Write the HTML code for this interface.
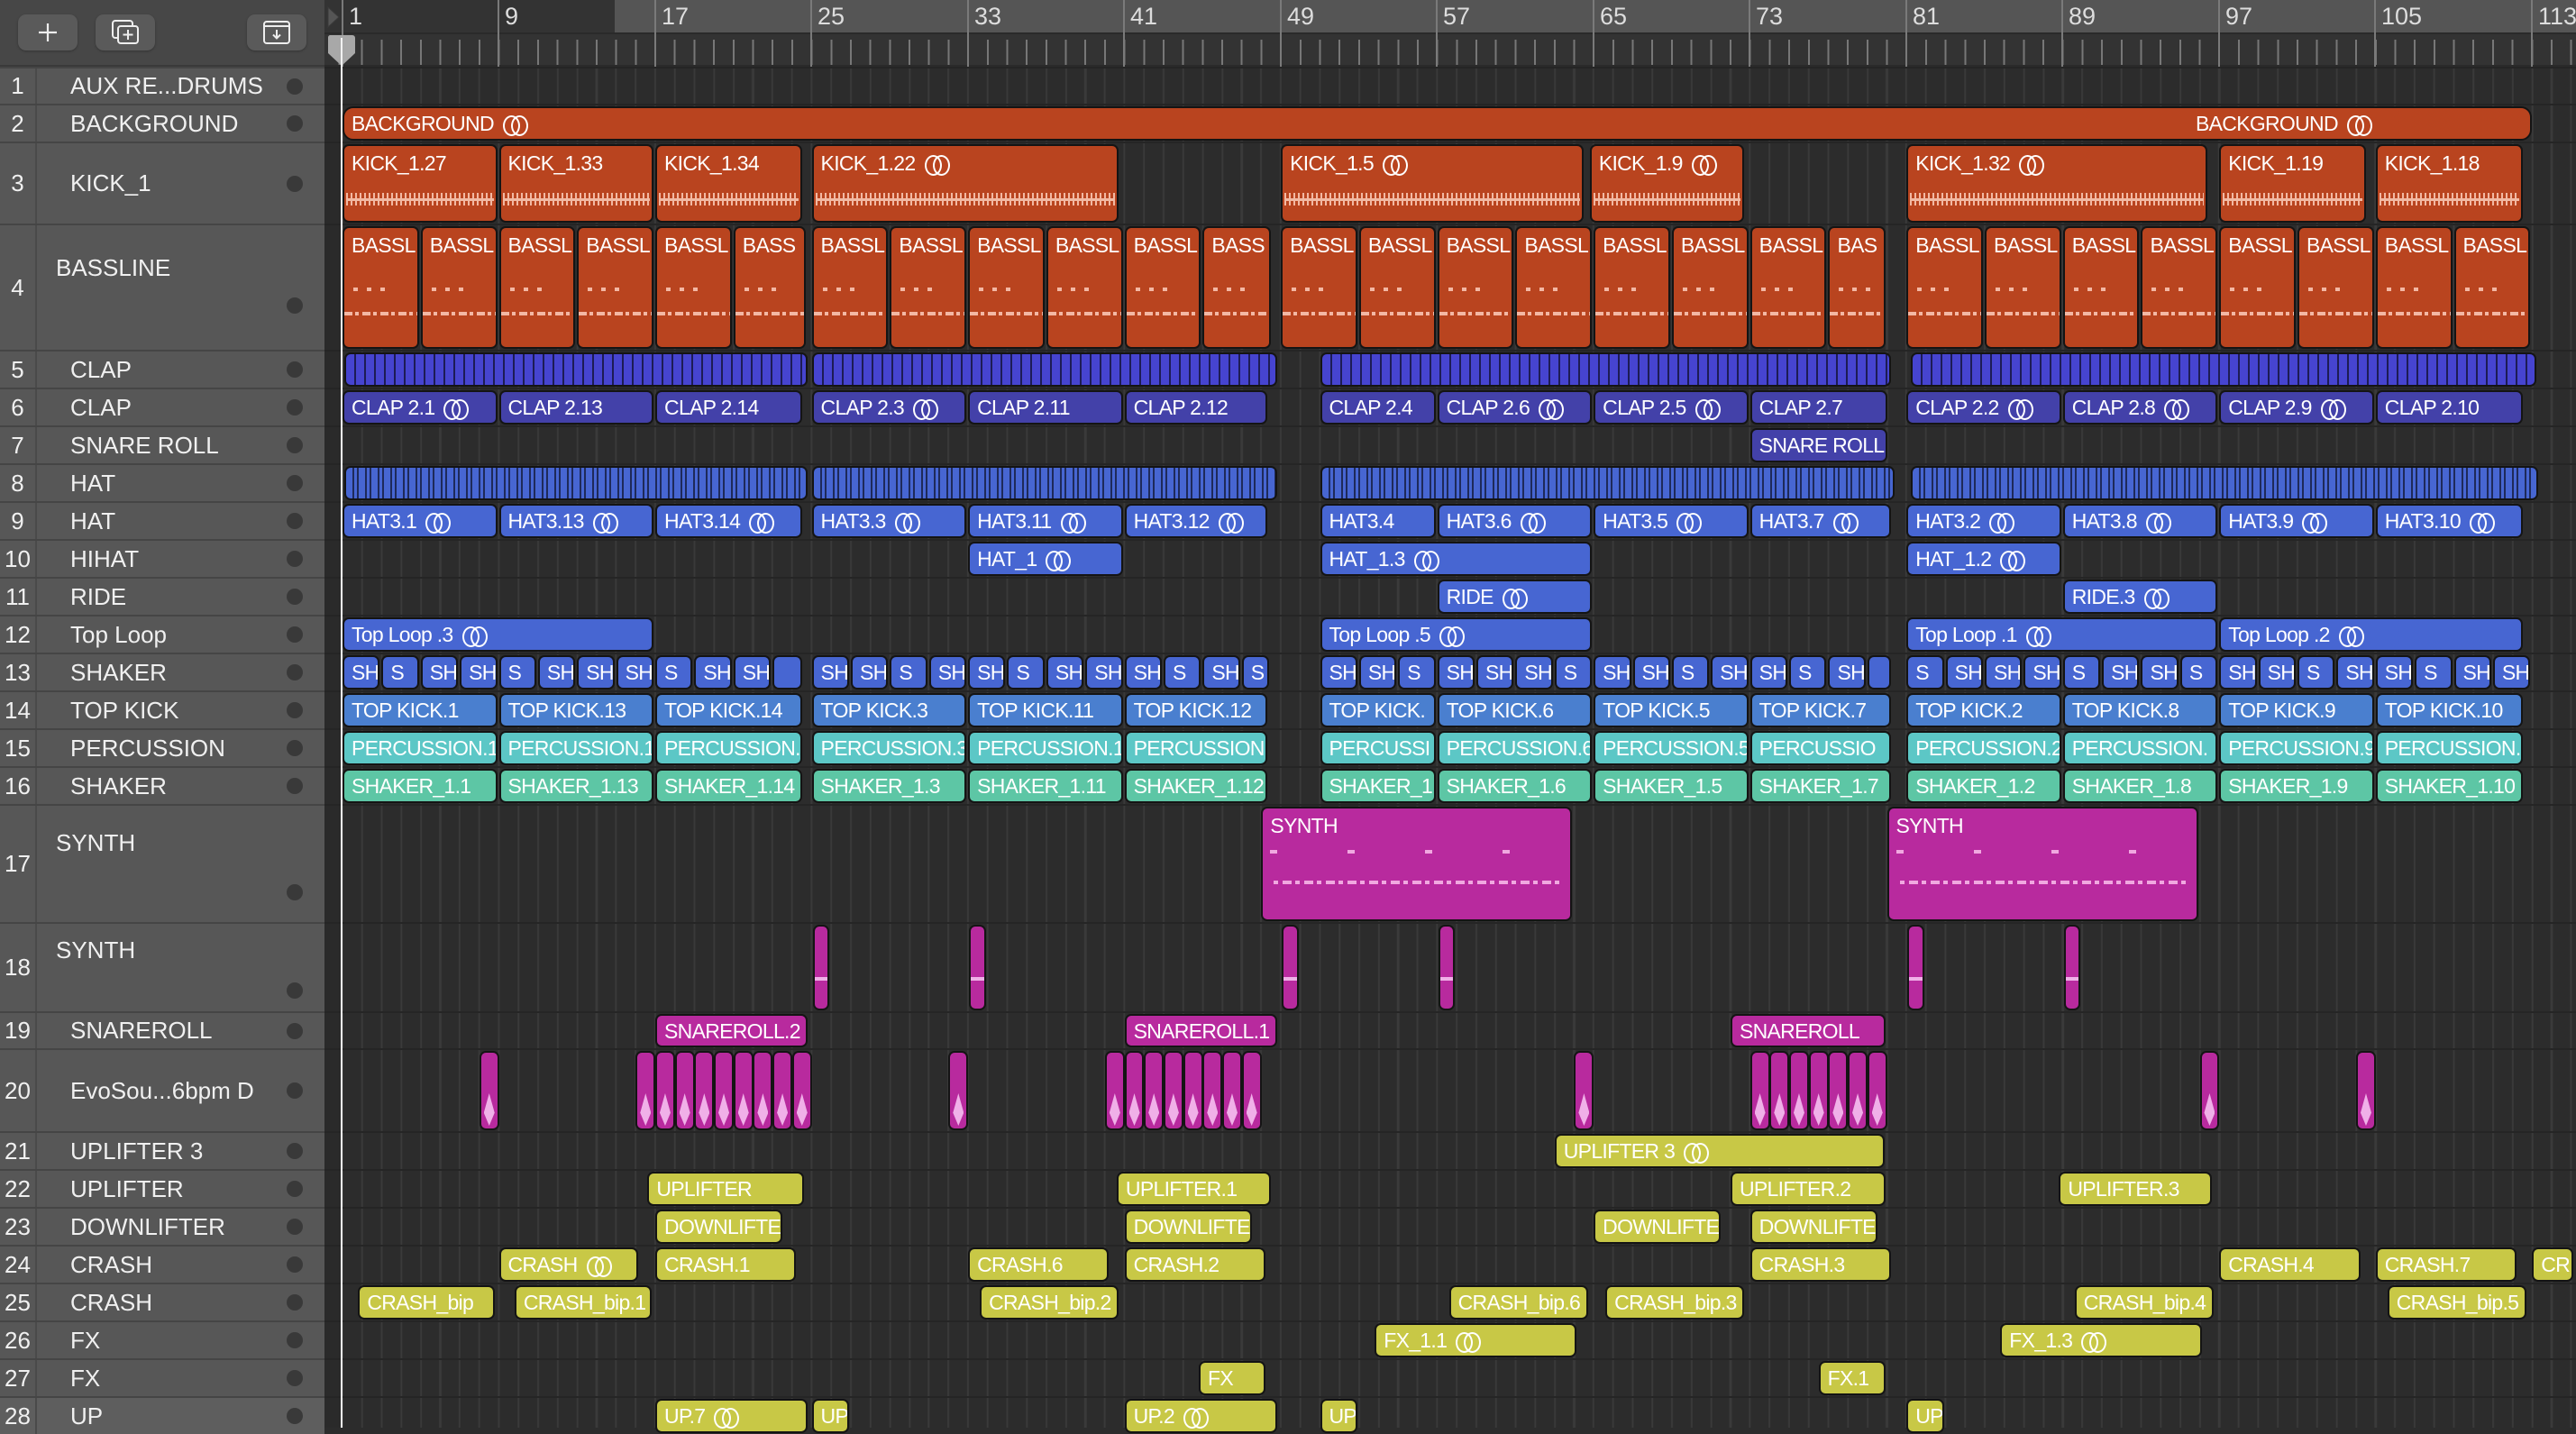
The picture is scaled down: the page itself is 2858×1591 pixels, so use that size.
<!DOCTYPE html>
<html><head><meta charset="utf-8"><style>
*{margin:0;padding:0;box-sizing:border-box}
body{width:2858px;height:1584px;overflow:hidden;background:#2c2c2c;font-family:"Liberation Sans",sans-serif;position:relative}
.tb{position:absolute;left:0;top:0;width:360px;height:74px;background:#474747;border-bottom:2px solid #3a3a3a}
.btn{position:absolute;top:16px;width:66px;height:40px;background:#5a5a5a;border-radius:9px;box-shadow:0 1px 2px #333}
.btn svg{position:absolute;left:0;top:0}
.rt{position:absolute;left:360px;top:0;width:2498px;height:36px;background:#555}
.rtd{position:absolute;left:360px;top:0;width:322px;height:36px;background:#333}
.rb{position:absolute;left:360px;top:36px;width:2498px;height:38px;background:#333;border-top:2px solid #2a2a2a;border-bottom:2px solid #2a2a2a;
background-image:repeating-linear-gradient(90deg,#777 0 2px,transparent 2px 21.69px);background-position:19px 6px;background-size:100% 30px;background-repeat:repeat-x}
.bn{position:absolute;top:0;height:74px;border-left:2px solid #7a7a7a;color:#ddd;font-size:27px;padding-left:6px;line-height:36px}
.grid{position:absolute;left:360px;top:74px;width:2498px;height:1510px;background-image:repeating-linear-gradient(90deg,#3a3a3a 0 2px,transparent 2px 21.69px);background-position:19px 0}
.w{position:absolute;left:0;width:2858px;border-top:2px solid #252525}
.hd{position:absolute;left:0;top:-2px;bottom:0;width:360px;background:#575757;border-top:2px solid #454545;color:#f0f0f0;font-size:26px}
.hd .n{position:absolute;left:0;top:0;bottom:0;width:41px;border-right:2px solid #4a4a4a;text-align:center;display:flex;align-items:center;justify-content:center}
.hd .nm{position:absolute;left:78px;top:0;bottom:0;display:flex;align-items:center;white-space:nowrap}
.hd .nm.tp{left:62px;align-items:flex-start}
.hd .d{position:absolute;left:318px;top:50%;margin-top:-9px;width:18px;height:18px;border-radius:50%;background:#393939}
.strip{position:absolute;left:360px;top:74px;width:19px;height:1510px;background:#2a2a2a}
.g{position:absolute;top:1px;bottom:1px;left:calc(380px + (var(--s) - 1) * 21.69px);width:calc((var(--e) - var(--s)) * 21.69px - 2px);border:2px solid #141414;border-radius:7px;color:#fff;font-size:23px;letter-spacing:-0.7px;padding-left:8px;line-height:34px;white-space:nowrap;overflow:hidden}
.o{background:#b9441f}
.c{background:#4341a9}
.cs{background:repeating-linear-gradient(90deg,#4644d0 0 9px,#1d1c55 9px 11px)}
.h{background:#4766d2}
.hs{background:repeating-linear-gradient(90deg,#4766d2 0 7px,#1e2a5a 7px 9px,#4766d2 9px 12px,#1e2a5a 12px 14px)}
.k2{background:#4a7fcf}
.p{background:#5cc7c6}
.s{background:#5dc6a5}
.m{background:#b82a9e}
.y{background:#c8c846}
.l{display:inline-block;position:relative;width:30px;height:20px;vertical-align:-3px;margin-left:10px}
.l::before,.l::after{content:"";position:absolute;top:0;width:15px;height:19px;border:2.5px solid #fff;border-radius:50%}
.l::before{left:0}.l::after{left:9px}
.wk::after{content:"";position:absolute;left:2px;right:2px;top:52px;height:14px;background:repeating-linear-gradient(90deg,#f2b9a3 0 2px,transparent 2px 5px)}
.wk::before{content:"";position:absolute;left:2px;right:2px;top:58px;height:3px;background:#f2b9a3}
.bs::before{content:"";position:absolute;left:10px;width:40px;top:66px;height:4px;background:repeating-linear-gradient(90deg,#f3b8a4 0 5px,transparent 5px 15px)}
.bs::after{content:"";position:absolute;left:0;right:0;top:93px;height:4px;background:repeating-linear-gradient(90deg,#f3b8a4 0 9px,transparent 9px 12px,#f3b8a4 12px 16px,transparent 16px 20px)}
.sy::before{content:"";position:absolute;left:8px;right:8px;top:46px;height:4px;background:repeating-linear-gradient(90deg,#f0a8e0 0 8px,transparent 8px 86px)}
.sy::after{content:"";position:absolute;left:12px;right:8px;top:80px;height:4px;background:repeating-linear-gradient(90deg,#f0a8e0 0 5px,transparent 5px 10px,#f0a8e0 10px 20px,transparent 20px 24px)}
.ev::after{content:"";position:absolute;left:50%;margin-left:-6px;top:45px;width:12px;height:36px;background:#f0b0e8;clip-path:polygon(50% 0,100% 60%,50% 100%,0 60%)}
.sy2{padding:0}
.sy2::after{content:"";position:absolute;left:0;right:0;top:56px;height:4px;background:#f0b0e8}
.tall{line-height:30px;padding-top:4px}
</style></head><body>

<div class="tb">
 <div class="btn" style="left:20px"><svg width="66" height="40"><path d="M33 10V30M23 20H43" stroke="#eee" stroke-width="2.2"/></svg></div>
 <div class="btn" style="left:106px"><svg width="66" height="40"><rect x="19" y="7" width="22" height="19" rx="3" fill="none" stroke="#eee" stroke-width="2"/><rect x="25" y="13" width="22" height="19" rx="3" fill="#5a5a5a" stroke="#eee" stroke-width="2"/><path d="M36 17V28M30.5 22.5H41.5" stroke="#eee" stroke-width="2"/></svg></div>
 <div class="btn" style="left:274px"><svg width="66" height="40"><rect x="19" y="8" width="28" height="24" rx="3" fill="none" stroke="#eee" stroke-width="2"/><path d="M19 13H47M33 17V26M29 22.5L33 26.5L37 22.5" stroke="#eee" stroke-width="2" fill="none"/></svg></div>
</div>

<div class="rt"></div><div class="rtd"></div>
<div class="rb"></div>
<svg style="position:absolute;left:362px;top:6px" width="16" height="26"><path d="M2 2L14 13L2 24Z" fill="#555" stroke="#3a3a3a"/></svg>
<div class="bn" style="left:379px">1</div>
<div class="bn" style="left:552px">9</div>
<div class="bn" style="left:726px">17</div>
<div class="bn" style="left:899px">25</div>
<div class="bn" style="left:1073px">33</div>
<div class="bn" style="left:1246px">41</div>
<div class="bn" style="left:1420px">49</div>
<div class="bn" style="left:1593px">57</div>
<div class="bn" style="left:1767px">65</div>
<div class="bn" style="left:1940px">73</div>
<div class="bn" style="left:2114px">81</div>
<div class="bn" style="left:2287px">89</div>
<div class="bn" style="left:2461px">97</div>
<div class="bn" style="left:2634px">105</div>
<div class="bn" style="left:2808px">113</div>

<div class="grid"></div>
<div class="strip"></div>

<div class="w" style="top:74px;height:41px"><div class="hd"><span class="n">1</span><span class="nm">AUX RE...DRUMS</span><span class="d"></span></div></div>

<div class="w" style="top:115px;height:42px"><div class="hd"><span class="n">2</span><span class="nm">BACKGROUND</span><span class="d"></span></div>
<div class="g o" style="--s:1;--e:113.1;border-radius:12px">BACKGROUND<span class="l"></span><span style="position:absolute;left:2054px">BACKGROUND<span class="l"></span></span></div>
</div>

<div class="w" style="top:157px;height:91px"><div class="hd"><span class="n">3</span><span class="nm">KICK_1</span><span class="d"></span></div>
<div class="g o wk tall" style="--s:1;--e:9">KICK_1.27</div>
<div class="g o wk tall" style="--s:9;--e:17">KICK_1.33</div>
<div class="g o wk tall" style="--s:17;--e:24.6">KICK_1.34</div>
<div class="g o wk tall" style="--s:25;--e:40.8">KICK_1.22<span class="l"></span></div>
<div class="g o wk tall" style="--s:49;--e:64.6">KICK_1.5<span class="l"></span></div>
<div class="g o wk tall" style="--s:64.8;--e:72.8">KICK_1.9<span class="l"></span></div>
<div class="g o wk tall" style="--s:81;--e:96.5">KICK_1.32<span class="l"></span></div>
<div class="g o wk tall" style="--s:97;--e:104.6">KICK_1.19</div>
<div class="g o wk tall" style="--s:105;--e:112.6">KICK_1.18</div>
</div>

<div class="w" style="top:248px;height:140px"><div class="hd"><span class="n">4</span><span class="nm tp" style="top:32px">BASSLINE</span><span class="d" style="top:auto;bottom:40px"></span></div>
<div class="g o bs tall" style="--s:1;--e:5">BASSL</div><div class="g o bs tall" style="--s:5;--e:9">BASSL</div><div class="g o bs tall" style="--s:9;--e:13">BASSL</div><div class="g o bs tall" style="--s:13;--e:17">BASSL</div><div class="g o bs tall" style="--s:17;--e:21">BASSL</div><div class="g o bs tall" style="--s:21;--e:24.8">BASS</div>
<div class="g o bs tall" style="--s:25;--e:29">BASSL</div><div class="g o bs tall" style="--s:29;--e:33">BASSL</div><div class="g o bs tall" style="--s:33;--e:37">BASSL</div><div class="g o bs tall" style="--s:37;--e:41">BASSL</div><div class="g o bs tall" style="--s:41;--e:45">BASSL</div><div class="g o bs tall" style="--s:45;--e:48.6">BASS</div>
<div class="g o bs tall" style="--s:49;--e:53">BASSL</div><div class="g o bs tall" style="--s:53;--e:57">BASSL</div><div class="g o bs tall" style="--s:57;--e:61">BASSL</div><div class="g o bs tall" style="--s:61;--e:65">BASSL</div><div class="g o bs tall" style="--s:65;--e:69">BASSL</div><div class="g o bs tall" style="--s:69;--e:73">BASSL</div><div class="g o bs tall" style="--s:73;--e:77">BASSL</div><div class="g o bs tall" style="--s:77;--e:80">BAS</div>
<div class="g o bs tall" style="--s:81;--e:85">BASSL</div><div class="g o bs tall" style="--s:85;--e:89">BASSL</div><div class="g o bs tall" style="--s:89;--e:93">BASSL</div><div class="g o bs tall" style="--s:93;--e:97">BASSL</div><div class="g o bs tall" style="--s:97;--e:101">BASSL</div><div class="g o bs tall" style="--s:101;--e:105">BASSL</div><div class="g o bs tall" style="--s:105;--e:109">BASSL</div><div class="g o bs tall" style="--s:109;--e:113">BASSL</div>
</div>

<div class="w" style="top:388px;height:42px"><div class="hd"><span class="n">5</span><span class="nm">CLAP</span><span class="d"></span></div>
<div class="g cs" style="--s:1.1;--e:24.9"></div><div class="g cs" style="--s:25;--e:48.9"></div><div class="g cs" style="--s:51;--e:80.3"></div><div class="g cs" style="--s:81.2;--e:113.3"></div>
</div>

<div class="w" style="top:430px;height:42px"><div class="hd"><span class="n">6</span><span class="nm">CLAP</span><span class="d"></span></div>
<div class="g c" style="--s:1;--e:9">CLAP 2.1<span class="l"></span></div><div class="g c" style="--s:9;--e:17">CLAP 2.13</div><div class="g c" style="--s:17;--e:24.6">CLAP 2.14</div><div class="g c" style="--s:25;--e:33">CLAP 2.3<span class="l"></span></div><div class="g c" style="--s:33;--e:41">CLAP 2.11</div><div class="g c" style="--s:41;--e:48.4">CLAP 2.12</div>
<div class="g c" style="--s:51;--e:57">CLAP 2.4</div><div class="g c" style="--s:57;--e:65">CLAP 2.6<span class="l"></span></div><div class="g c" style="--s:65;--e:73">CLAP 2.5<span class="l"></span></div><div class="g c" style="--s:73;--e:80.1">CLAP 2.7</div>
<div class="g c" style="--s:81;--e:89">CLAP 2.2<span class="l"></span></div><div class="g c" style="--s:89;--e:97">CLAP 2.8<span class="l"></span></div><div class="g c" style="--s:97;--e:105">CLAP 2.9<span class="l"></span></div><div class="g c" style="--s:105;--e:112.6">CLAP 2.10</div>
</div>

<div class="w" style="top:472px;height:42px"><div class="hd"><span class="n">7</span><span class="nm">SNARE ROLL</span><span class="d"></span></div>
<div class="g c" style="--s:73;--e:80.1">SNARE ROLL</div>
</div>

<div class="w" style="top:514px;height:42px"><div class="hd"><span class="n">8</span><span class="nm">HAT</span><span class="d"></span></div>
<div class="g hs" style="--s:1.1;--e:24.9"></div><div class="g hs" style="--s:25;--e:48.9"></div><div class="g hs" style="--s:51;--e:80.5"></div><div class="g hs" style="--s:81.2;--e:113.4"></div>
</div>

<div class="w" style="top:556px;height:42px"><div class="hd"><span class="n">9</span><span class="nm">HAT</span><span class="d"></span></div>
<div class="g h" style="--s:1;--e:9">HAT3.1<span class="l"></span></div><div class="g h" style="--s:9;--e:17">HAT3.13<span class="l"></span></div><div class="g h" style="--s:17;--e:24.6">HAT3.14<span class="l"></span></div><div class="g h" style="--s:25;--e:33">HAT3.3<span class="l"></span></div><div class="g h" style="--s:33;--e:41">HAT3.11<span class="l"></span></div><div class="g h" style="--s:41;--e:48.4">HAT3.12<span class="l"></span></div>
<div class="g h" style="--s:51;--e:57">HAT3.4</div><div class="g h" style="--s:57;--e:65">HAT3.6<span class="l"></span></div><div class="g h" style="--s:65;--e:73">HAT3.5<span class="l"></span></div><div class="g h" style="--s:73;--e:80.3">HAT3.7<span class="l"></span></div>
<div class="g h" style="--s:81;--e:89">HAT3.2<span class="l"></span></div><div class="g h" style="--s:89;--e:97">HAT3.8<span class="l"></span></div><div class="g h" style="--s:97;--e:105">HAT3.9<span class="l"></span></div><div class="g h" style="--s:105;--e:112.6">HAT3.10<span class="l"></span></div>
</div>

<div class="w" style="top:598px;height:42px"><div class="hd"><span class="n">10</span><span class="nm">HIHAT</span><span class="d"></span></div>
<div class="g h" style="--s:33;--e:41">HAT_1<span class="l"></span></div><div class="g h" style="--s:51;--e:65">HAT_1.3<span class="l"></span></div><div class="g h" style="--s:81;--e:89">HAT_1.2<span class="l"></span></div>
</div>

<div class="w" style="top:640px;height:42px"><div class="hd"><span class="n">11</span><span class="nm">RIDE</span><span class="d"></span></div>
<div class="g h" style="--s:57;--e:65">RIDE<span class="l"></span></div><div class="g h" style="--s:89;--e:97">RIDE.3<span class="l"></span></div>
</div>

<div class="w" style="top:682px;height:42px"><div class="hd"><span class="n">12</span><span class="nm">Top Loop</span><span class="d"></span></div>
<div class="g h" style="--s:1;--e:17">Top Loop .3<span class="l"></span></div><div class="g h" style="--s:51;--e:65">Top Loop .5<span class="l"></span></div><div class="g h" style="--s:81;--e:97">Top Loop .1<span class="l"></span></div><div class="g h" style="--s:97;--e:112.6">Top Loop .2<span class="l"></span></div>
</div>

<div class="w" style="top:724px;height:42px"><div class="hd"><span class="n">13</span><span class="nm">SHAKER</span><span class="d"></span></div>
<div class="g h" style="--s:1;--e:3">SH</div><div class="g h" style="--s:3;--e:5">S</div><div class="g h" style="--s:5;--e:7">SH</div><div class="g h" style="--s:7;--e:9">SH</div><div class="g h" style="--s:9;--e:11">S</div><div class="g h" style="--s:11;--e:13">SH</div><div class="g h" style="--s:13;--e:15">SH</div><div class="g h" style="--s:15;--e:17">SH</div><div class="g h" style="--s:17;--e:19">S</div><div class="g h" style="--s:19;--e:21">SH</div><div class="g h" style="--s:21;--e:23">SH</div><div class="g h" style="--s:23;--e:24.6"></div>
<div class="g h" style="--s:25;--e:27">SH</div><div class="g h" style="--s:27;--e:29">SH</div><div class="g h" style="--s:29;--e:31">S</div><div class="g h" style="--s:31;--e:33">SH</div><div class="g h" style="--s:33;--e:35">SH</div><div class="g h" style="--s:35;--e:37">S</div><div class="g h" style="--s:37;--e:39">SH</div><div class="g h" style="--s:39;--e:41">SH</div><div class="g h" style="--s:41;--e:43">SH</div><div class="g h" style="--s:43;--e:45">S</div><div class="g h" style="--s:45;--e:47">SH</div><div class="g h" style="--s:47;--e:48.5">S</div>
<div class="g h" style="--s:51;--e:53">SH</div><div class="g h" style="--s:53;--e:55">SH</div><div class="g h" style="--s:55;--e:57">S</div><div class="g h" style="--s:57;--e:59">SH</div><div class="g h" style="--s:59;--e:61">SH</div><div class="g h" style="--s:61;--e:63">SH</div><div class="g h" style="--s:63;--e:65">S</div><div class="g h" style="--s:65;--e:67">SH</div><div class="g h" style="--s:67;--e:69">SH</div><div class="g h" style="--s:69;--e:71">S</div><div class="g h" style="--s:71;--e:73">SH</div><div class="g h" style="--s:73;--e:75">SH</div><div class="g h" style="--s:75;--e:77">S</div><div class="g h" style="--s:77;--e:79">SH</div><div class="g h" style="--s:79;--e:80.3"></div>
<div class="g h" style="--s:81;--e:83">S</div><div class="g h" style="--s:83;--e:85">SH</div><div class="g h" style="--s:85;--e:87">SH</div><div class="g h" style="--s:87;--e:89">SH</div><div class="g h" style="--s:89;--e:91">S</div><div class="g h" style="--s:91;--e:93">SH</div><div class="g h" style="--s:93;--e:95">SH</div><div class="g h" style="--s:95;--e:97">S</div><div class="g h" style="--s:97;--e:99">SH</div><div class="g h" style="--s:99;--e:101">SH</div><div class="g h" style="--s:101;--e:103">S</div><div class="g h" style="--s:103;--e:105">SH</div><div class="g h" style="--s:105;--e:107">SH</div><div class="g h" style="--s:107;--e:109">S</div><div class="g h" style="--s:109;--e:111">SH</div><div class="g h" style="--s:111;--e:113">SH</div>
</div>

<div class="w" style="top:766px;height:42px"><div class="hd"><span class="n">14</span><span class="nm">TOP KICK</span><span class="d"></span></div>
<div class="g k2" style="--s:1;--e:9">TOP KICK.1</div><div class="g k2" style="--s:9;--e:17">TOP KICK.13</div><div class="g k2" style="--s:17;--e:24.6">TOP KICK.14</div><div class="g k2" style="--s:25;--e:33">TOP KICK.3</div><div class="g k2" style="--s:33;--e:41">TOP KICK.11</div><div class="g k2" style="--s:41;--e:48.4">TOP KICK.12</div>
<div class="g k2" style="--s:51;--e:57">TOP KICK.</div><div class="g k2" style="--s:57;--e:65">TOP KICK.6</div><div class="g k2" style="--s:65;--e:73">TOP KICK.5</div><div class="g k2" style="--s:73;--e:80.3">TOP KICK.7</div>
<div class="g k2" style="--s:81;--e:89">TOP KICK.2</div><div class="g k2" style="--s:89;--e:97">TOP KICK.8</div><div class="g k2" style="--s:97;--e:105">TOP KICK.9</div><div class="g k2" style="--s:105;--e:112.6">TOP KICK.10</div>
</div>

<div class="w" style="top:808px;height:42px"><div class="hd"><span class="n">15</span><span class="nm">PERCUSSION</span><span class="d"></span></div>
<div class="g p" style="--s:1;--e:9">PERCUSSION.1</div><div class="g p" style="--s:9;--e:17">PERCUSSION.1</div><div class="g p" style="--s:17;--e:24.6">PERCUSSION.</div><div class="g p" style="--s:25;--e:33">PERCUSSION.3</div><div class="g p" style="--s:33;--e:41">PERCUSSION.1</div><div class="g p" style="--s:41;--e:48.4">PERCUSSION.</div>
<div class="g p" style="--s:51;--e:57">PERCUSSI</div><div class="g p" style="--s:57;--e:65">PERCUSSION.6</div><div class="g p" style="--s:65;--e:73">PERCUSSION.5</div><div class="g p" style="--s:73;--e:80.3">PERCUSSIO</div>
<div class="g p" style="--s:81;--e:89">PERCUSSION.2</div><div class="g p" style="--s:89;--e:97">PERCUSSION.</div><div class="g p" style="--s:97;--e:105">PERCUSSION.9</div><div class="g p" style="--s:105;--e:112.6">PERCUSSION.1</div>
</div>

<div class="w" style="top:850px;height:42px"><div class="hd"><span class="n">16</span><span class="nm">SHAKER</span><span class="d"></span></div>
<div class="g s" style="--s:1;--e:9">SHAKER_1.1</div><div class="g s" style="--s:9;--e:17">SHAKER_1.13</div><div class="g s" style="--s:17;--e:24.6">SHAKER_1.14</div><div class="g s" style="--s:25;--e:33">SHAKER_1.3</div><div class="g s" style="--s:33;--e:41">SHAKER_1.11</div><div class="g s" style="--s:41;--e:48.4">SHAKER_1.12</div>
<div class="g s" style="--s:51;--e:57">SHAKER_1.</div><div class="g s" style="--s:57;--e:65">SHAKER_1.6</div><div class="g s" style="--s:65;--e:73">SHAKER_1.5</div><div class="g s" style="--s:73;--e:80.3">SHAKER_1.7</div>
<div class="g s" style="--s:81;--e:89">SHAKER_1.2</div><div class="g s" style="--s:89;--e:97">SHAKER_1.8</div><div class="g s" style="--s:97;--e:105">SHAKER_1.9</div><div class="g s" style="--s:105;--e:112.6">SHAKER_1.10</div>
</div>

<div class="w" style="top:892px;height:131px"><div class="hd"><span class="n">17</span><span class="nm tp" style="top:26px">SYNTH</span><span class="d" style="top:87px;margin-top:0"></span></div>
<div class="g m sy tall" style="--s:48;--e:64">SYNTH</div><div class="g m sy tall" style="--s:80;--e:96">SYNTH</div>
</div>

<div class="w" style="top:1023px;height:99px"><div class="hd"><span class="n">18</span><span class="nm tp" style="top:14px">SYNTH</span><span class="d" style="top:65px;margin-top:0"></span></div>
<div class="g m sy2" style="--s:25.05;--e:26"></div><div class="g m sy2" style="--s:33.05;--e:34"></div><div class="g m sy2" style="--s:49.05;--e:50"></div><div class="g m sy2" style="--s:57.05;--e:58"></div><div class="g m sy2" style="--s:81.05;--e:82"></div><div class="g m sy2" style="--s:89.05;--e:90"></div>
</div>

<div class="w" style="top:1122px;height:41px"><div class="hd"><span class="n">19</span><span class="nm">SNAREROLL</span><span class="d"></span></div>
<div class="g m" style="--s:17;--e:24.9">SNAREROLL.2</div><div class="g m" style="--s:41;--e:48.9">SNAREROLL.1</div><div class="g m" style="--s:72;--e:80">SNAREROLL</div>
</div>

<div class="w" style="top:1163px;height:92px"><div class="hd"><span class="n">20</span><span class="nm">EvoSou...6bpm D</span><span class="d"></span></div>
<div class="g m ev" style="--s:8;--e:9.1"></div>
<div class="g m ev" style="--s:16;--e:17.1"></div><div class="g m ev" style="--s:17;--e:18.1"></div><div class="g m ev" style="--s:18;--e:19.1"></div><div class="g m ev" style="--s:19;--e:20.1"></div><div class="g m ev" style="--s:20;--e:21.1"></div><div class="g m ev" style="--s:21;--e:22.1"></div><div class="g m ev" style="--s:22;--e:23.1"></div><div class="g m ev" style="--s:23;--e:24.1"></div><div class="g m ev" style="--s:24;--e:25.1"></div>
<div class="g m ev" style="--s:32;--e:33.1"></div>
<div class="g m ev" style="--s:40;--e:41.1"></div><div class="g m ev" style="--s:41;--e:42.1"></div><div class="g m ev" style="--s:42;--e:43.1"></div><div class="g m ev" style="--s:43;--e:44.1"></div><div class="g m ev" style="--s:44;--e:45.1"></div><div class="g m ev" style="--s:45;--e:46.1"></div><div class="g m ev" style="--s:46;--e:47.1"></div><div class="g m ev" style="--s:47;--e:48.1"></div>
<div class="g m ev" style="--s:64;--e:65.1"></div>
<div class="g m ev" style="--s:73;--e:74.1"></div><div class="g m ev" style="--s:74;--e:75.1"></div><div class="g m ev" style="--s:75;--e:76.1"></div><div class="g m ev" style="--s:76;--e:77.1"></div><div class="g m ev" style="--s:77;--e:78.1"></div><div class="g m ev" style="--s:78;--e:79.1"></div><div class="g m ev" style="--s:79;--e:80.1"></div>
<div class="g m ev" style="--s:96;--e:97.1"></div><div class="g m ev" style="--s:104;--e:105.1"></div>
</div>

<div class="w" style="top:1255px;height:42px"><div class="hd"><span class="n">21</span><span class="nm">UPLIFTER 3</span><span class="d"></span></div>
<div class="g y" style="--s:63;--e:80">UPLIFTER 3<span class="l"></span></div>
</div>

<div class="w" style="top:1297px;height:42px"><div class="hd"><span class="n">22</span><span class="nm">UPLIFTER</span><span class="d"></span></div>
<div class="g y" style="--s:16.6;--e:24.7">UPLIFTER</div><div class="g y" style="--s:40.6;--e:48.6">UPLIFTER.1</div><div class="g y" style="--s:72;--e:80">UPLIFTER.2</div><div class="g y" style="--s:88.8;--e:96.7">UPLIFTER.3</div>
</div>

<div class="w" style="top:1339px;height:42px"><div class="hd"><span class="n">23</span><span class="nm">DOWNLIFTER</span><span class="d"></span></div>
<div class="g y" style="--s:17;--e:23.6">DOWNLIFTE</div><div class="g y" style="--s:41;--e:47.6">DOWNLIFTE</div><div class="g y" style="--s:65;--e:71.6">DOWNLIFTE</div><div class="g y" style="--s:73;--e:79.6">DOWNLIFTE</div>
</div>

<div class="w" style="top:1381px;height:42px"><div class="hd"><span class="n">24</span><span class="nm">CRASH</span><span class="d"></span></div>
<div class="g y" style="--s:9;--e:16.2">CRASH<span class="l"></span></div><div class="g y" style="--s:17;--e:24.3">CRASH.1</div><div class="g y" style="--s:33;--e:40.3">CRASH.6</div><div class="g y" style="--s:41;--e:48.3">CRASH.2</div><div class="g y" style="--s:73;--e:80.3">CRASH.3</div><div class="g y" style="--s:97;--e:104.3">CRASH.4</div><div class="g y" style="--s:105;--e:112.3">CRASH.7</div><div class="g y" style="--s:113;--e:115.2">CR</div>
</div>

<div class="w" style="top:1423px;height:42px"><div class="hd"><span class="n">25</span><span class="nm">CRASH</span><span class="d"></span></div>
<div class="g y" style="--s:1.8;--e:8.9">CRASH_bip</div><div class="g y" style="--s:9.8;--e:16.9">CRASH_bip.1</div><div class="g y" style="--s:33.6;--e:40.8">CRASH_bip.2</div><div class="g y" style="--s:57.6;--e:64.8">CRASH_bip.6</div><div class="g y" style="--s:65.6;--e:72.8">CRASH_bip.3</div><div class="g y" style="--s:89.6;--e:96.8">CRASH_bip.4</div><div class="g y" style="--s:105.6;--e:112.8">CRASH_bip.5</div>
</div>

<div class="w" style="top:1465px;height:42px"><div class="hd"><span class="n">26</span><span class="nm">FX</span><span class="d"></span></div>
<div class="g y" style="--s:53.8;--e:64.2">FX_1.1<span class="l"></span></div><div class="g y" style="--s:85.8;--e:96.2">FX_1.3<span class="l"></span></div>
</div>

<div class="w" style="top:1507px;height:42px"><div class="hd"><span class="n">27</span><span class="nm">FX</span><span class="d"></span></div>
<div class="g y" style="--s:44.8;--e:48.3">FX</div><div class="g y" style="--s:76.5;--e:80">FX.1</div>
</div>

<div class="w" style="top:1549px;height:42px"><div class="hd" style="background:#5e5e5e"><span class="n">28</span><span class="nm">UP</span><span class="d"></span></div>
<div class="g y" style="--s:17;--e:24.9">UP.7<span class="l"></span></div><div class="g y" style="--s:25;--e:27">UP</div><div class="g y" style="--s:41;--e:48.9">UP.2<span class="l"></span></div><div class="g y" style="--s:51;--e:53">UP</div><div class="g y" style="--s:81;--e:83">UP</div>
</div>

<div style="position:absolute;left:378px;top:40px;width:2px;height:1544px;background:#f2f2f2"></div>
<svg style="position:absolute;left:362px;top:38px" width="34" height="36"><path d="M4 1H29a3 3 0 0 1 3 3V21L17 35L2 21V4a3 3 0 0 1 2-3Z" fill="#a8a8a8"/><rect x="16" y="4" width="2" height="32" fill="#f2f2f2"/></svg>
</body></html>
